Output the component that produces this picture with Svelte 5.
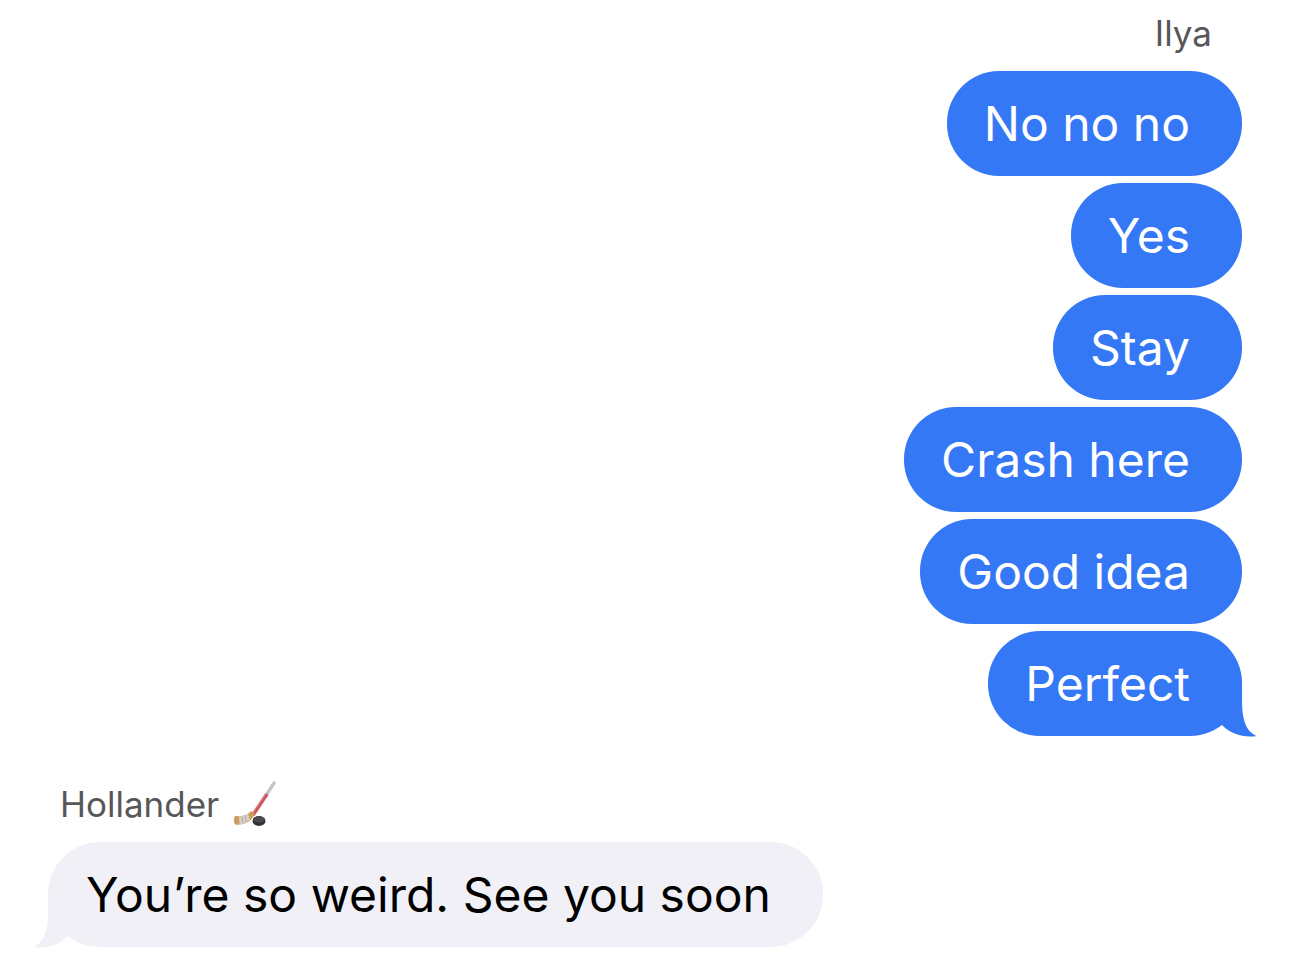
<script lang="ts">
  const sender = 'Ilya';
  const sent = ['No no no', 'Yes', 'Stay', 'Crash here', 'Good idea', 'Perfect'];
  const contact = 'Hollander';
  const received = ['You’re so weird. See you soon'];
</script>

{#snippet tail()}
  <svg class="tail" viewBox="0 0 36 56" aria-hidden="true">
    <path d="M0 0H21V20C21 38 25 51 36 55C22 57 10 53 1 44L0 43Z" />
  </svg>
{/snippet}

<main class="chat">
  <section class="group sent">
    <h2 class="name">{sender}</h2>
    {#each sent as text, i}
      <p class="bubble">
        {text}
        {#if i === sent.length - 1}{@render tail()}{/if}
      </p>
    {/each}
  </section>

  <section class="group received">
    <h2 class="name">
      {contact}
      <svg class="hockey" viewBox="0 0 44 46" role="img" aria-label="Hockey stick and puck">
        <g fill="none">
          <path d="M42 2L33 16" stroke="#c4c4c8" stroke-width="3.4" stroke-linecap="round" />
          <path d="M35 13L21 34" stroke="#cf5560" stroke-width="3.6" />
          <path d="M34 12L20 33" stroke="#e58d92" stroke-width="1" />
        </g>
        <!-- blade with its tape -->
        <path d="M19 30L23 32.5C21 37 18 40.5 14 42C10 43.500 6 44 3 43.500C1.500 41 1.500 37.500 3 35C9 35.500 15 35 19 30Z" fill="#cf9b5e" />
        <path d="M7 35.200C11 35.200 14 34.300 16 32.700L18 38.700C15 41.500 12 42.800 7.500 43.600Z" fill="#d5d0c8" />
        <path d="M10 35.500L11 42M13 34.500L14.500 41" stroke="#aaa298" stroke-width="0.8" fill="none" />
        <ellipse cx="27" cy="40" rx="6.500" ry="5" fill="#303235" />
        <ellipse cx="27" cy="38.400" rx="6" ry="3" fill="#484a4e" />
      </svg>
    </h2>
    {#each received as text, i}
      <p class="bubble">
        {text}
        {#if i === received.length - 1}{@render tail()}{/if}
      </p>
    {/each}
  </section>
</main>

<style>
  :global(body) {
    margin: 0;
    background: #fff;
  }

  .chat {
    display: flex;
    flex-direction: column;
    gap: 45px;
    padding: 10px 48px 18px;
    font-family: Inter, 'Liberation Sans', sans-serif;
  }

  .group {
    display: flex;
    flex-direction: column;
    align-items: flex-start;
    gap: 7px;
  }
  .sent { align-items: flex-end; }

  .name {
    display: flex;
    align-items: center;
    gap: 13px;
    margin: 0 0 8px;
    padding: 0 12px;
    font-size: 35px;
    font-weight: 400;
    line-height: 46px;
    color: #57575a;
  }
  .sent .name { padding-right: 30px; }

  .bubble {
    position: relative;
    margin: 0;
    padding: 21px 52px 20px 38px;
    border-radius: 52px;
    font-size: 48px;
    line-height: 64px;
    color: #000;
    background: #f1f0f6;
  }
  .sent .bubble {
    padding-left: 37px;
    color: #fff;
    background: #3478f6;
  }

  .tail {
    position: absolute;
    right: -15px;
    bottom: -1px;
    width: 36px;
    height: 56px;
    fill: #3478f6;
  }
  .received .tail {
    right: auto;
    left: -15px;
    fill: #f1f0f6;
    transform: scaleX(-1);
  }

  .hockey {
    width: 44px;
    height: 46px;
  }
</style>
